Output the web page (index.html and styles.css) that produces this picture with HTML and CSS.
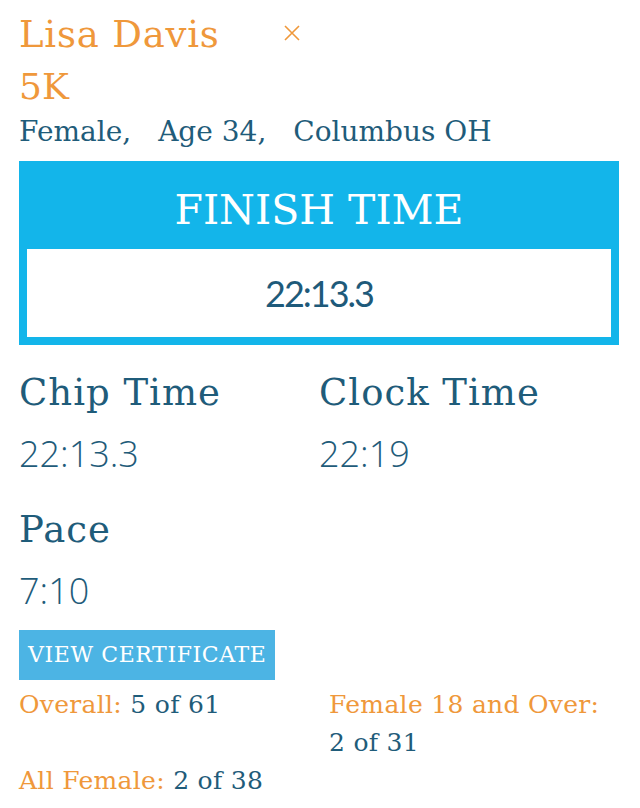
FILE: index.html
```html
<!DOCTYPE html>
<html lang="en">
<head>
<meta charset="utf-8">
<title>Lisa Davis - 5K</title>
<link rel="stylesheet" href="styles.css">
</head>
<body>
<main class="page">
  <header class="athlete">
    <div class="name-row">
      <h1 class="name">Lisa Davis</h1>
      <button class="close" aria-label="Close">
        <svg width="18" height="18" viewBox="0 0 18 18"><path d="M2 2 L16 16 M16 2 L2 16" stroke="#ef983b" stroke-width="1.6" fill="none"/></svg>
      </button>
    </div>
    <div class="race">5K</div>
    <div class="meta"><span>Female,</span><span>Age 34,</span><span>Columbus OH</span></div>
  </header>

  <section class="finish">
    <div class="finish-title">FINISH TIME</div>
    <div class="finish-value">22:13.3</div>
  </section>

  <section class="times">
    <div class="time">
      <h2 class="time-label">Chip Time</h2>
      <div class="time-value">22:13.3</div>
    </div>
    <div class="time">
      <h2 class="time-label">Clock Time</h2>
      <div class="time-value">22:19</div>
    </div>
    <div class="time">
      <h2 class="time-label">Pace</h2>
      <div class="time-value">7:10</div>
    </div>
  </section>

  <a class="cert" href="#">VIEW CERTIFICATE</a>

  <section class="ranks">
    <div class="rank"><span class="rank-label">Overall:</span> <span class="rank-value">5 of 61</span></div>
    <div class="rank"><span class="rank-label">Female 18 and Over:</span> <span class="rank-value">2 of 31</span></div>
    <div class="rank"><span class="rank-label">All Female:</span> <span class="rank-value">2 of 38</span></div>
  </section>
</main>
</body>
</html>
```
FILE: styles.css
```css
html, body {
  margin: 0;
  padding: 0;
  background: #ffffff;
}

.page {
  width: 600px;
  padding: 9px 21px 0 19px;
  font-family: "DejaVu Serif", serif;
  color: #1f5c7a;
}

.athlete {
  margin-bottom: 11px;
}

.name-row {
  display: flex;
  align-items: center;
}

.name {
  margin: 0;
  width: 264px;
  font-size: 37px;
  letter-spacing: 0.8px;
  line-height: 52px;
  font-weight: normal;
  color: #ef983b;
}

.close {
  display: flex;
  padding: 0;
  border: 0;
  background: none;
  margin-top: -4px;
}

.race {
  font-size: 36px;
  line-height: 52px;
  color: #ef983b;
}

.meta {
  display: flex;
  gap: 27px;
  font-size: 28px;
  line-height: 37px;
  color: #1f5c7a;
}

.finish {
  background: #13b5ea;
  padding: 0 8px 8px;
}

.finish-title {
  padding-top: 10px;
  font-size: 41px;
  line-height: 78px;
  text-align: center;
  color: #ffffff;
}

.finish-value {
  background: #ffffff;
  height: 88px;
  line-height: 88px;
  text-align: center;
  font-family: "Lato", sans-serif;
  font-size: 36px;
  letter-spacing: -2px;
  color: #1e5a7a;
}

.times {
  display: grid;
  grid-template-columns: 300px 300px;
  row-gap: 22px;
  margin-top: 22px;
}

.time-label {
  margin: 0;
  font-size: 37px;
  letter-spacing: 1px;
  line-height: 52px;
  font-weight: normal;
  color: #1f5c7a;
}

.time-value {
  margin-top: 7px;
  font-family: "Open Sans", sans-serif;
  font-weight: 300;
  font-size: 36px;
  line-height: 56px;
  color: #1f5c7a;
}

.cert {
  display: inline-block;
  margin-top: 11px;
  width: 256px;
  height: 50px;
  box-sizing: border-box;
  padding-left: 9px;
  background: #4cb4e4;
  color: #ffffff;
  text-decoration: none;
  font-size: 22px;
  letter-spacing: 0.6px;
  line-height: 50px;
  white-space: nowrap;
  vertical-align: top;
}

.ranks {
  display: grid;
  grid-template-columns: 310px 290px;
  margin-top: 6px;
  font-size: 25px;
  letter-spacing: 0.3px;
  line-height: 38px;
}

.rank-label {
  color: #ef983b;
}

.rank-value {
  color: #1f5c7a;
  white-space: nowrap;
}
```
